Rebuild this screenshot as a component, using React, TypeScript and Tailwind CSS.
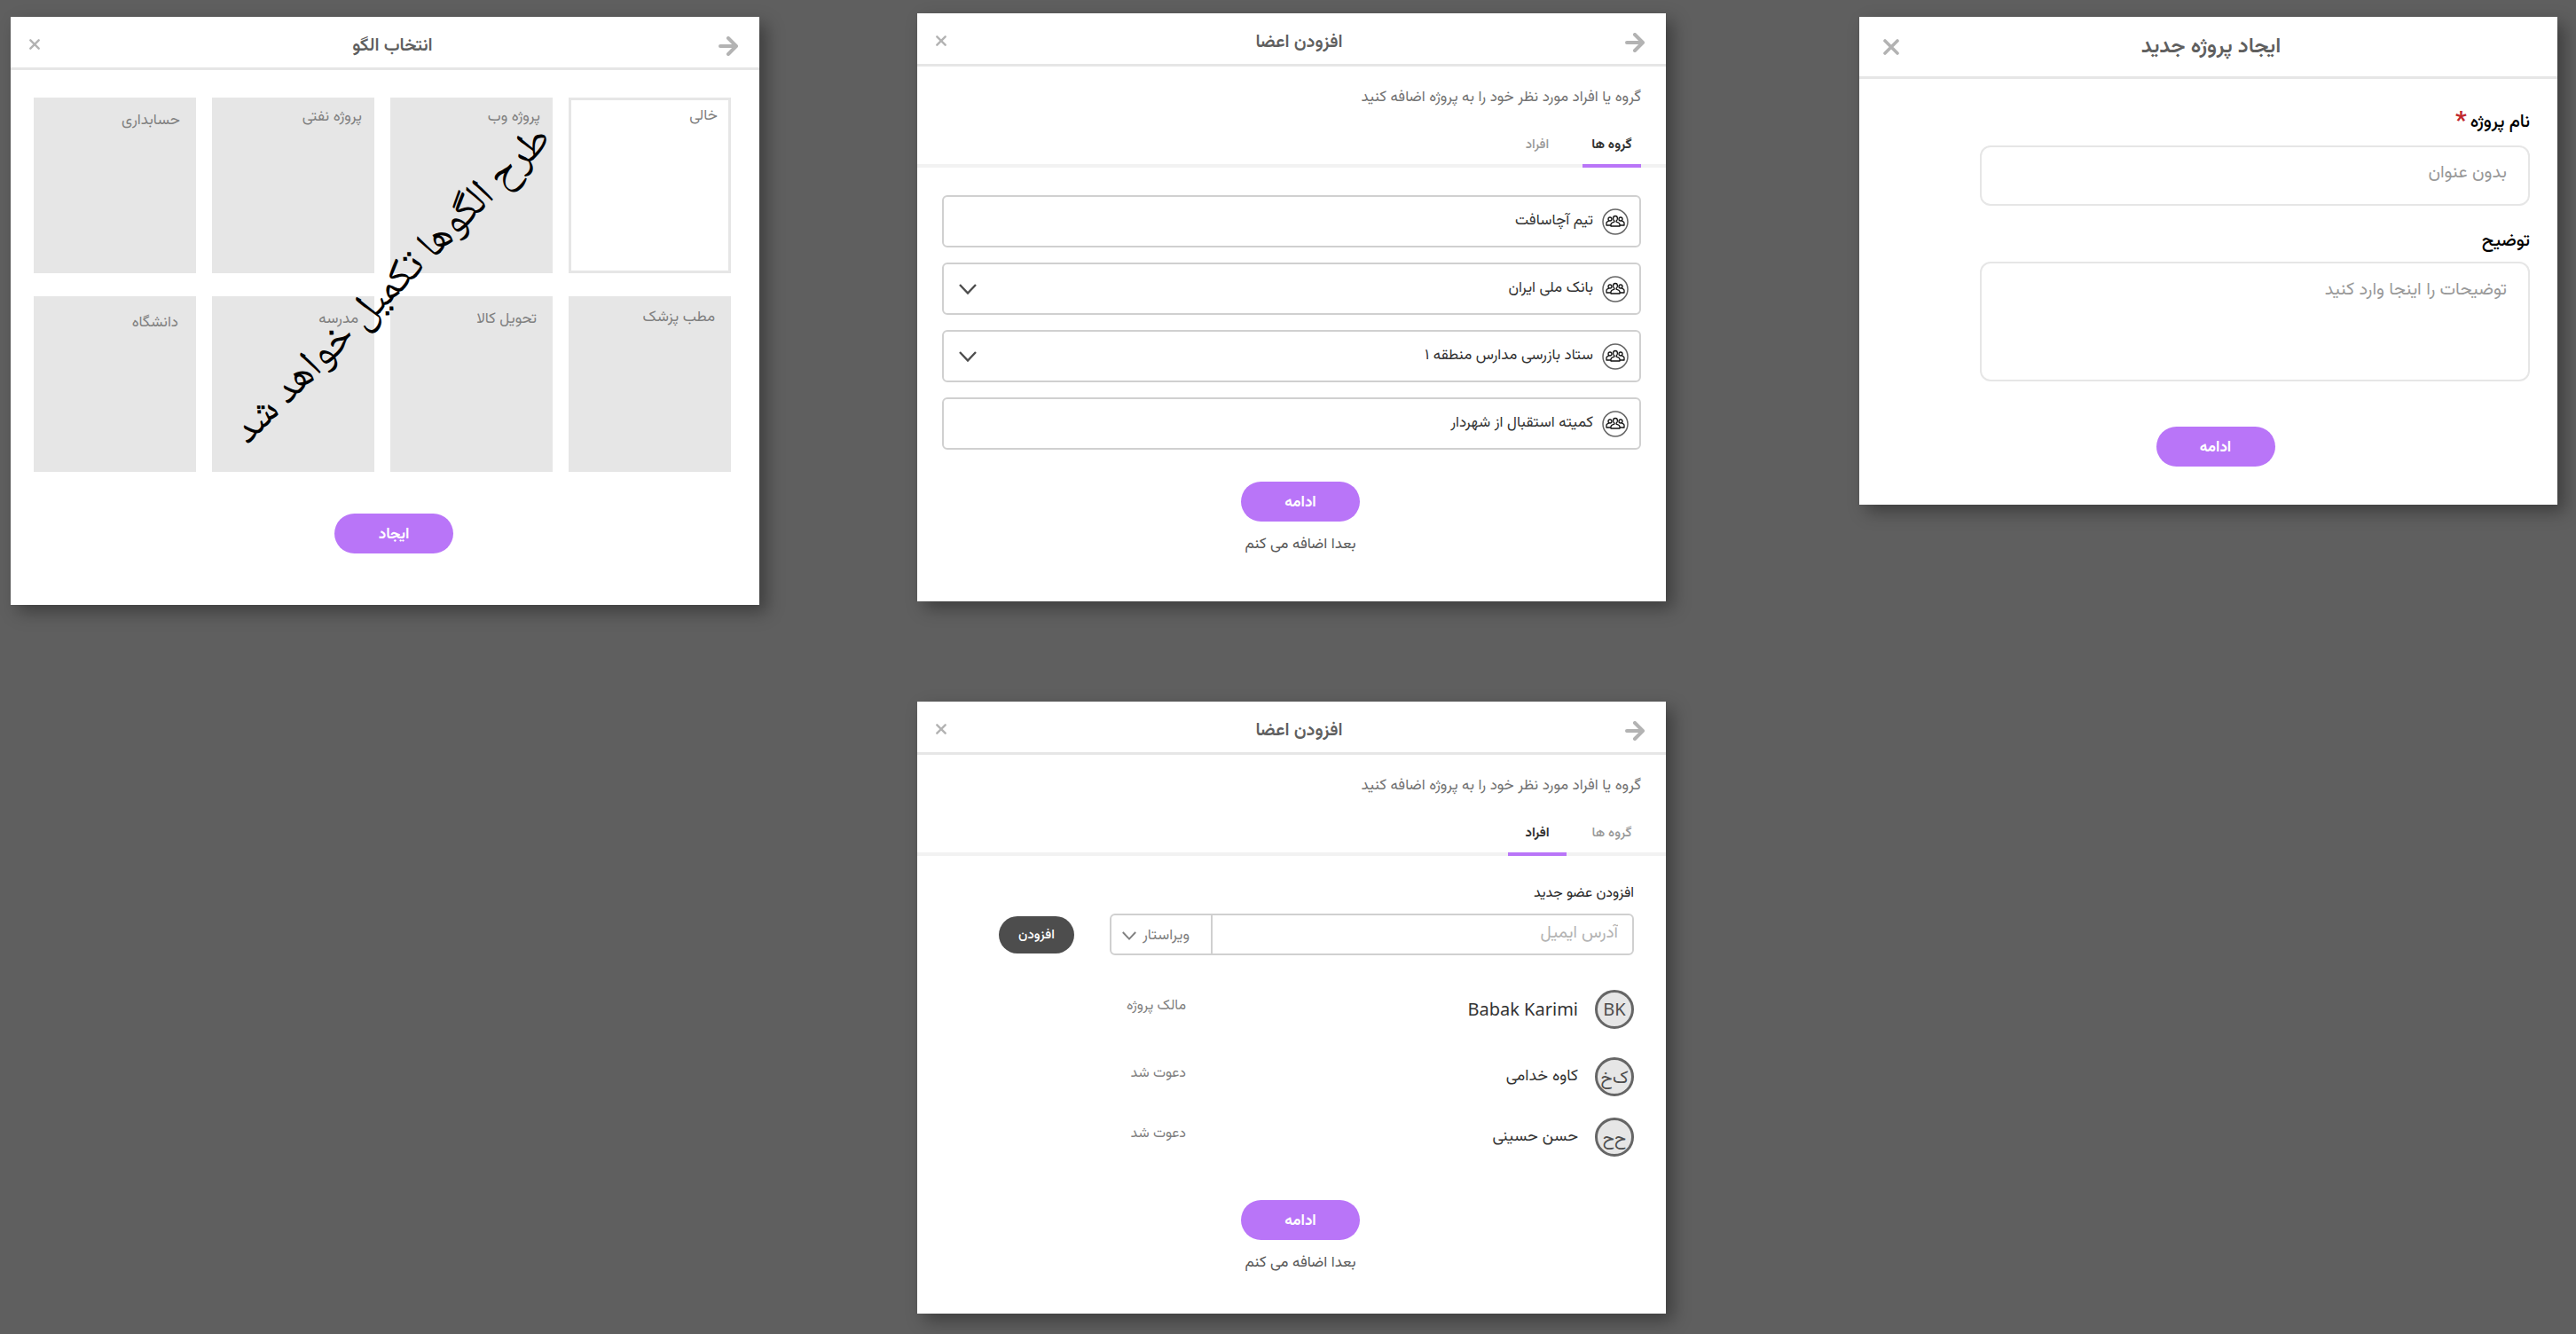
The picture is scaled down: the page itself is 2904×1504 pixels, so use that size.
import { useState } from "react";
import type { ReactNode } from "react";

const cardClass = "bg-white shadow-[8px_8px_18px_rgba(0,0,0,0.35)]";

function CloseIcon({ className }: { className: string }) {
  return (
    <svg viewBox="0 0 18 18" className={className} fill="none" stroke="#b3b3b3" strokeWidth="3.6" strokeLinecap="round" aria-hidden="true">
      <path d="M2 2 16 16M16 2 2 16" />
    </svg>
  );
}

function ArrowIcon() {
  return (
    <svg viewBox="0 0 22 22" className="h-[22px] w-[22px]" fill="none" stroke="#b3b3b3" strokeWidth="4" strokeLinecap="round" strokeLinejoin="round" aria-hidden="true">
      <path d="M2 11H19M11 2 20 11 11 20" />
    </svg>
  );
}

function ChevronIcon({ className }: { className: string }) {
  return (
    <svg viewBox="0 0 20 12" className={className} fill="none" stroke="currentColor" strokeWidth="2.4" aria-hidden="true">
      <path d="M1 1 10 10.500 19 1" />
    </svg>
  );
}

function GroupIcon() {
  return (
    <svg viewBox="0 0 30 30" className="h-[30px] w-[30px] shrink-0" fill="none" aria-hidden="true">
      <circle cx="15" cy="15" r="14" stroke="#666666" strokeWidth="1.5" />
      <g stroke="#111111" strokeWidth="1.3" strokeLinejoin="round">
        <circle cx="9" cy="12" r="2" />
        <circle cx="21" cy="12" r="2" />
        <path d="M10 19H5v-2.500c0-1.200.8-1.800 2.800-2.300M20 19h5v-2.500c0-1.200-.8-1.800-2.800-2.300" />
        <path d="M15 8.500c-1.600 0-2.400 1.100-2.400 2.700 0 1.400.6 2.400 1.300 2.900v1c-2.600.7-3.900 1.200-3.900 2.900v2h10v-2c0-1.700-1.300-2.200-3.900-2.900v-1c.7-.5 1.300-1.500 1.300-2.900 0-1.600-.8-2.700-2.400-2.700Z" fill="#ffffff" />
      </g>
    </svg>
  );
}

function DialogHeader({ title }: { title: string }) {
  return (
    <header className="flex h-[60px] items-center border-b-[3px] border-[#e6e6e6] pr-6 pl-[21px]">
      <button type="button" aria-label="بازگشت" className="pt-2">
        <ArrowIcon />
      </button>
      <h2 className="flex-1 pt-2 pl-[30px] text-center text-xl font-semibold text-[#5f5f5f]">{title}</h2>
      <button type="button" aria-label="بستن" className="pt-1">
        <CloseIcon className="h-3 w-3" />
      </button>
    </header>
  );
}

function PrimaryButton({ children }: { children: ReactNode }) {
  return (
    <button type="button" className="h-[45px] w-[134px] rounded-full bg-[#b975f8] pt-1 text-[17px] font-bold text-white">
      {children}
    </button>
  );
}

function CreateProject() {
  return (
    <section className={cardClass}>
      <header className="flex h-[70px] items-center border-b-[3px] border-[#e6e6e6] px-[27px]">
        <h2 className="flex-1 pr-3 text-center text-2xl font-semibold text-[#5f5f5f]">ایجاد پروژه جدید</h2>
        <button type="button" aria-label="بستن">
          <CloseIcon className="h-[18px] w-[18px]" />
        </button>
      </header>
      <form>
        <div className="flex flex-col pt-[37px] pr-[31px] pl-[136px]">
          <label htmlFor="project-name" className="flex h-6 items-center gap-1 text-xl leading-6 font-medium text-black">
            نام پروژه
            <span className="text-[28px] font-bold text-[#c1272d]">*</span>
          </label>
          <input
            id="project-name"
            type="text"
            placeholder="بدون عنوان"
            className="mt-3.5 h-[68px] rounded-xl border-2 border-[#e6e6e6] px-6 pb-1.5 text-xl outline-none placeholder:text-[#999999]"
          />
          <label htmlFor="project-description" className="mt-7 text-xl leading-6 font-medium text-black">
            توضیح
          </label>
          <textarea
            id="project-description"
            placeholder="توضیحات را اینجا وارد کنید"
            className="mt-[11px] h-[135px] resize-none rounded-xl border-2 border-[#e6e6e6] px-6 pt-[18px] text-xl leading-6 outline-none placeholder:text-[#999999]"
          />
        </div>
        <div className="flex justify-center pt-[51px] pb-[43px] pl-4">
          <PrimaryButton>ادامه</PrimaryButton>
        </div>
      </form>
    </section>
  );
}

type Tab = "groups" | "people";

function MembersIntro({ tab, onTab }: { tab: Tab; onTab: (tab: Tab) => void }) {
  const tabs: { id: Tab; label: string }[] = [
    { id: "groups", label: "گروه ها" },
    { id: "people", label: "افراد" },
  ];
  return (
    <>
      <p className="px-7 pt-[23px] text-[17px] leading-6 text-[#737373]">گروه یا افراد مورد نظر خود را به پروژه اضافه کنید</p>
      <div role="tablist" className="flex gap-[18px] border-b-4 border-[#f2f2f2] px-7">
        {tabs.map((item) => (
          <button
            key={item.id}
            type="button"
            role="tab"
            aria-selected={item.id === tab}
            onClick={() => onTab(item.id)}
            className={
              item.id === tab
                ? "-mb-1 w-[66px] border-b-4 border-[#b975f8] pt-[30px] pb-[9px] text-[15px] leading-6 font-bold text-[#333333]"
                : "-mb-1 w-[66px] border-b-4 border-transparent pt-[30px] pb-[9px] text-[15px] leading-6 font-medium text-[#999999]"
            }
          >
            {item.label}
          </button>
        ))}
      </div>
    </>
  );
}

function GroupsPanel() {
  const groups = [
    { name: "تیم آچاسافت", expandable: false },
    { name: "بانک ملی ایران", expandable: true },
    { name: "ستاد بازرسی مدارس منطقه ۱", expandable: true },
    { name: "کمیته استقبال از شهردار", expandable: false },
  ];
  return (
    <ul className="flex flex-col gap-[17px] px-7 pt-[31px] pb-9">
      {groups.map((group) => (
        <li key={group.name}>
          <button type="button" className="flex h-[59px] w-full items-center gap-2.5 rounded-md border-2 border-[#d0d0d0] pr-3 pl-[17px] text-[#4d4d4d]">
            <GroupIcon />
            <span className="flex-1 text-right text-[17px] text-[#333333]">{group.name}</span>
            {group.expandable && <ChevronIcon className="h-3 w-5" />}
          </button>
        </li>
      ))}
    </ul>
  );
}

function PeoplePanel() {
  const people = [
    { initials: "BK", name: "Babak Karimi", role: "مالک پروژه", row: "mb-2", nameStyle: "font-['Noto_Sans',sans-serif] text-xl" },
    { initials: "ک‌خ", name: "کاوه خدامی", role: "دعوت شد", row: "", nameStyle: "text-[18px]" },
    { initials: "ح‌ح", name: "حسن حسینی", role: "دعوت شد", row: "", nameStyle: "text-[18px]" },
  ];
  return (
    <div className="pt-[31px] pr-9 pb-[49px] pl-[92px]">
      <label htmlFor="member-email" className="block text-base leading-6 text-[#262626]">
        افزودن عضو جدید
      </label>
      <div className="mt-2.5 flex items-center gap-10">
        <div className="flex h-[47px] min-w-0 flex-1 rounded-md border-2 border-[#d0d0d0]">
          <input
            id="member-email"
            type="email"
            placeholder="آدرس ایمیل"
            className="min-w-0 flex-1 px-4 text-right text-[19px] outline-none placeholder:text-[#b3b3b3]"
          />
          <div className="relative w-[114px] border-r-2 border-[#d0d0d0] text-[#808080]">
            <select aria-label="نقش" className="h-full w-full appearance-none bg-transparent pt-1 pr-6 text-[17px] outline-none">
              <option>ویراستار</option>
            </select>
            <ChevronIcon className="pointer-events-none absolute top-[18px] left-3 h-2.5 w-4" />
          </div>
        </div>
        <button type="button" className="h-[42px] w-[85px] rounded-full bg-[#4d4d4d] pt-1 text-[15px] font-medium text-white">
          افزودن
        </button>
      </div>
      <ul className="flex flex-col gap-6 pt-[39px]">
        {people.map((person) => (
          <li key={person.name} className={`flex items-center ${person.row}`}>
            <span className="flex h-11 w-11 items-center justify-center rounded-full border-[3px] border-[#666666] bg-[#e6e6e6] font-['Noto_Sans','Vazirmatn',sans-serif] text-xl leading-6 text-[#4d4d4d]">
              {person.initials}
            </span>
            <span className={`flex-1 pr-[19px] text-[#333333] ${person.nameStyle}`}>{person.name}</span>
            <span className="w-[211px] pb-1.5 text-base text-[#808080]">{person.role}</span>
          </li>
        ))}
      </ul>
    </div>
  );
}

function AddMembers({ initialTab }: { initialTab: Tab }) {
  const [tab, setTab] = useState<Tab>(initialTab);
  return (
    <section className={cardClass}>
      <DialogHeader title="افزودن اعضا" />
      <MembersIntro tab={tab} onTab={setTab} />
      {tab === "groups" ? <GroupsPanel /> : <PeoplePanel />}
      <div className={tab === "groups" ? "flex flex-col items-center gap-3.5 pb-[52px] pl-5" : "flex flex-col items-center gap-3.5 pb-[45px] pl-5"}>
        <PrimaryButton>ادامه</PrimaryButton>
        <button type="button" className="text-[17px] leading-6 text-[#595959]">
          بعدا اضافه می کنم
        </button>
      </div>
    </section>
  );
}

function ChooseTemplate() {
  const templates = [
    { name: "خالی", style: "border-[3px] border-[#e6e6e6] bg-white px-3 pt-1.5" },
    { name: "پروژه وب", style: "bg-[#e6e6e6] px-3.5 pt-2.5" },
    { name: "پروژه نفتی", style: "bg-[#e6e6e6] px-3.5 pt-2.5" },
    { name: "حسابداری", style: "bg-[#e6e6e6] px-[18px] pt-3.5" },
    { name: "مطب پزشک", style: "bg-[#e6e6e6] px-[18px] pt-3" },
    { name: "تحویل کالا", style: "bg-[#e6e6e6] px-[18px] pt-3.5" },
    { name: "مدرسه", style: "bg-[#e6e6e6] px-[18px] pt-3.5" },
    { name: "دانشگاه", style: "bg-[#e6e6e6] px-5 pt-[18px]" },
  ];
  return (
    <section className={cardClass}>
      <DialogHeader title="انتخاب الگو" />
      <div className="relative pt-[31px] pr-8 pl-[26px]">
        <div className="grid grid-cols-4 gap-x-[18px] gap-y-[26px]">
          {templates.map((template) => (
            <button
              key={template.name}
              type="button"
              className={`flex h-[198px] items-start text-[17px] leading-6 text-[#808080] ${template.style}`}
            >
              {template.name}
            </button>
          ))}
        </div>
        <p className="pointer-events-none absolute top-9 right-0 bottom-0 left-5 flex items-center justify-center">
          <span className="-rotate-45 font-['Noto_Naskh_Arabic','DejaVu_Sans',serif] text-[47px] whitespace-nowrap text-black">
            طرح الگوها تکمیل خواهد شد
          </span>
        </p>
      </div>
      <div className="flex justify-center pt-[47px] pb-[58px] pl-5">
        <PrimaryButton>ایجاد</PrimaryButton>
      </div>
    </section>
  );
}

export default function App() {
  return (
    <main
      dir="rtl"
      lang="fa"
      className="grid min-h-screen grid-cols-[787fr_218fr_844fr_178fr_844fr] items-start bg-[#5f5f5f] pt-[15px] pr-[21px] pb-[23px] pl-3 font-['Vazirmatn','Noto_Sans_Arabic','DejaVu_Sans',sans-serif]"
    >
      <div className="pt-1">
        <CreateProject />
      </div>
      <div className="col-start-3 flex flex-col gap-[113px]">
        <AddMembers initialTab="groups" />
        <AddMembers initialTab="people" />
      </div>
      <div className="col-start-5 pt-1">
        <ChooseTemplate />
      </div>
    </main>
  );
}
